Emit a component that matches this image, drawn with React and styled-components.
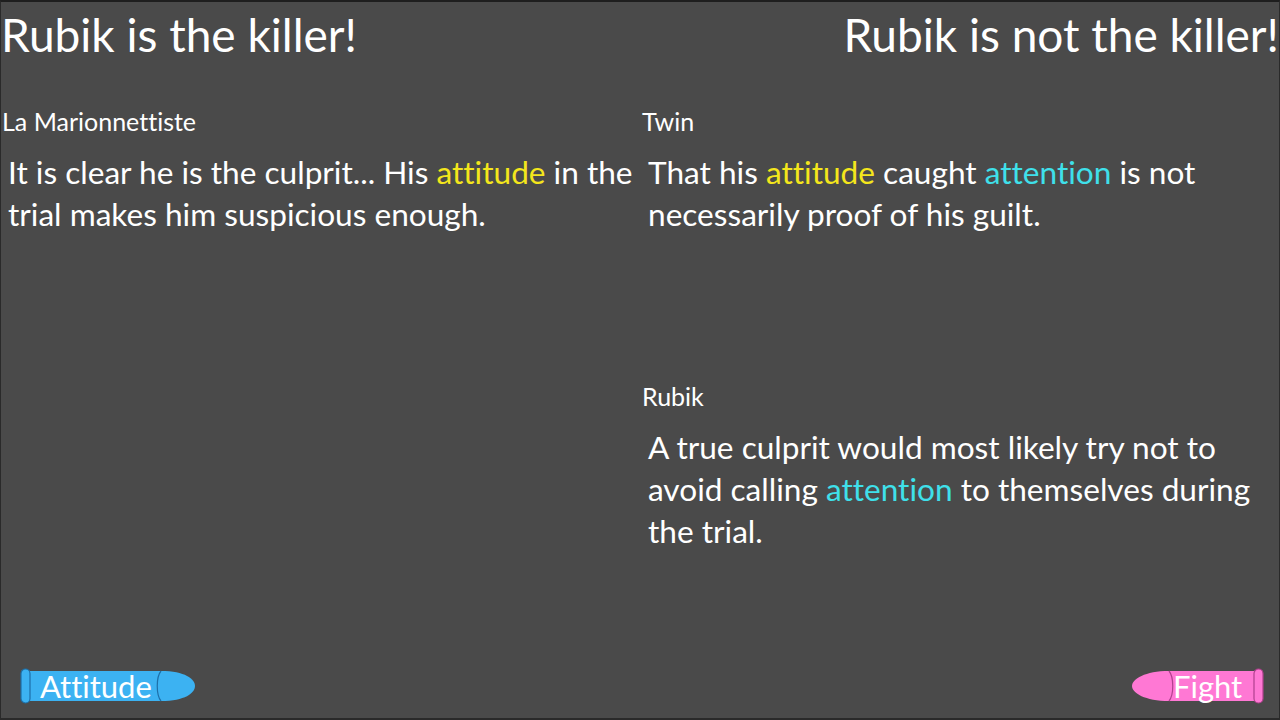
import React from 'react'
import styled, { createGlobalStyle } from 'styled-components'

const GlobalStyle = createGlobalStyle`
  html, body {
    margin: 0;
    padding: 0;
    background: #4a4a4a;
  }
  * {
    box-sizing: border-box;
  }
`

const lines = {
  left: [
    {
      speaker: 'La Marionnettiste',
      parts: [
        ['It is clear he is the culprit... His '],
        ['attitude', 'yellow'],
        [' in the trial makes him suspicious enough.'],
      ],
    },
  ],
  right: [
    {
      speaker: 'Twin',
      parts: [
        ['That his '],
        ['attitude', 'yellow'],
        [' caught '],
        ['attention', 'cyan'],
        [' is not necessarily proof of his guilt.'],
      ],
    },
    {
      speaker: 'Rubik',
      parts: [
        ['A true culprit would most likely try not to avoid calling '],
        ['attention', 'cyan'],
        [' to themselves during the trial.'],
      ],
    },
  ],
}

const colors = {
  yellow: '#f4e61c',
  cyan: '#3fe0ea',
}

const Screen = styled.div`
  width: 1280px;
  height: 720px;
  background: #4a4a4a;
  border-top: 2px solid #1e1e1e;
  border-left: 1px solid #2a2a2a;
  border-right: 1px solid #2a2a2a;
  border-bottom: 2px solid #2a2a2a;
  font-family: 'Lato', 'Noto Sans', sans-serif;
  font-variant-ligatures: none;
  color: #ffffff;
  display: flex;
  flex-direction: column;
  overflow: hidden;
`

const Sides = styled.div`
  flex: 1;
  display: grid;
  grid-template-columns: 640px 1fr;
`

const Side = styled.section`
  display: flex;
  flex-direction: column;
  align-items: stretch;
  min-width: 0;
`

const Claim = styled.h1`
  margin: 0;
  height: 70px;
  padding-top: 8px;
  font-size: 46px;
  font-weight: 400;
  line-height: 50px;
  text-align: ${p => p.$align};
  white-space: nowrap;
`

const Statement = styled.div`
  margin-top: ${p => p.$gap}px;
  padding-left: ${p => p.$indent}px;
`

const Speaker = styled.div`
  font-size: 25px;
  line-height: 30px;
  margin-bottom: 15px;
`

const Speech = styled.p`
  margin: 0;
  padding-left: 6px;
  font-size: 31.6px;
  line-height: 42px;
  width: 642px;
`

const Word = styled.span`
  color: ${p => colors[p.$tone] || 'inherit'};
`

const Controls = styled.div`
  height: 50px;
  padding: 0 15px 0 19px;
  display: flex;
  justify-content: space-between;
  align-items: flex-start;
`

const Crayon = styled.button`
  position: relative;
  width: ${p => p.$w}px;
  height: 36px;
  border: 0;
  background: none;
  padding: 0;
  padding-left: ${p => p.$pl}px;
  font-family: inherit;
  font-variant-ligatures: none;
  font-size: 31px;
  color: #ffffff;
  text-align: left;
  line-height: 36px;
  cursor: pointer;

  svg {
    position: absolute;
    left: 0;
    top: 0;
  }

  span {
    position: relative;
  }
`

const BlueCrayon = () => (
  <Crayon $w={176} $pl={20}>
    <svg width="176" height="36" viewBox="0 0 176 36">
      <path d="M6 3 H141 C165 3 175 11 175 18 C175 25 165 33 141 33 H6 Z" fill="#3cb2f2" />
      <path d="M141 3 C136 9 136 27 141 33" fill="none" stroke="#1d6fa8" strokeWidth="1.2" />
      <rect x="1" y="1" width="9" height="34" rx="4.5" fill="#3cb2f2" stroke="#1d6fa8" strokeWidth="1.2" />
    </svg>
    <span>Attitude</span>
  </Crayon>
)

const PinkCrayon = () => (
  <Crayon $w={133} $pl={42}>
    <svg width="133" height="36" viewBox="0 0 133 36">
      <path d="M127 3 H38 C14 3 1 11 1 18 C1 25 14 33 38 33 H127 Z" fill="#ff78d4" />
      <path d="M38 3 C43 9 43 27 38 33" fill="none" stroke="#b0408e" strokeWidth="1.2" />
      <rect x="123" y="1" width="9" height="34" rx="4.5" fill="#ff78d4" stroke="#b0408e" strokeWidth="1.2" />
    </svg>
    <span>Fight</span>
  </Crayon>
)

const Line = ({ speaker, parts, gap, indent }) => (
  <Statement $gap={gap} $indent={indent}>
    <Speaker>{speaker}</Speaker>
    <Speech>
      {parts.map(([text, tone], i) => (
        <Word key={i} $tone={tone}>{text}</Word>
      ))}
    </Speech>
  </Statement>
)

export default function App() {
  return (
    <>
      <GlobalStyle />
      <Screen>
        <Sides>
          <Side>
            <Claim $align="left">Rubik is the killer!</Claim>
            {lines.left.map((l, i) => (
              <Line key={i} {...l} gap={34} indent={1} />
            ))}
          </Side>
          <Side>
            <Claim $align="right">Rubik is not the killer!</Claim>
            <Line {...lines.right[0]} gap={34} indent={1} />
            <Line {...lines.right[1]} gap={146} indent={1} />
          </Side>
        </Sides>
        <Controls>
          <BlueCrayon />
          <PinkCrayon />
        </Controls>
      </Screen>
    </>
  )
}
